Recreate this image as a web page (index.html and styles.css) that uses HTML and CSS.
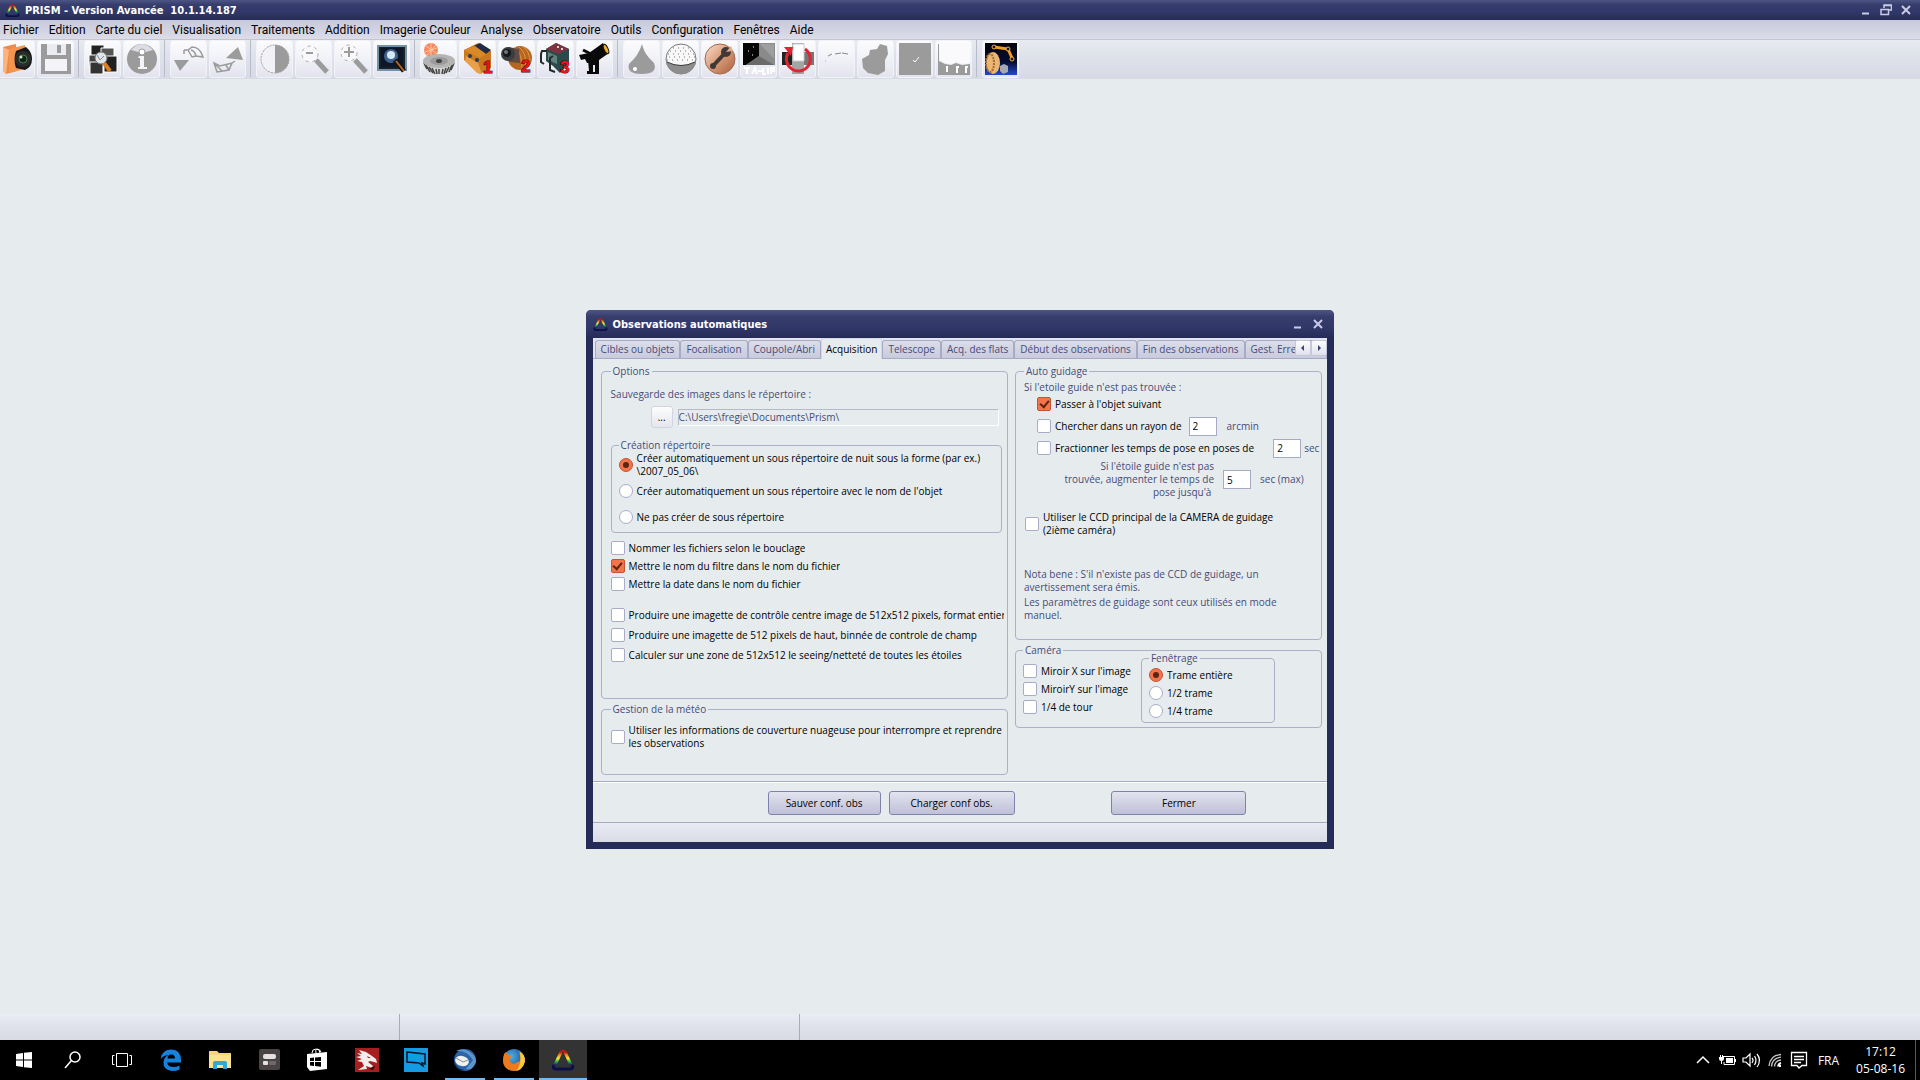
FILE: index.html
```html
<!DOCTYPE html>
<html lang="fr">
<head>
  <meta charset="UTF-8">
  <meta name="viewport" content="width=device-width, initial-scale=1.0">
  <title>PRISM - Version Avancée 10.1.14.187</title>
  <link rel="stylesheet" href="styles.css">
</head>
<body>

  <!-- Shared shapes -->
  <svg class="defs" aria-hidden="true">
    <defs>
      <linearGradient id="gLeft" x1="0" y1="0" x2="0" y2="1">
        <stop offset="0" stop-color="#d21f14"/><stop offset=".3" stop-color="#f0a81c"/>
        <stop offset=".5" stop-color="#f2e83a"/><stop offset=".75" stop-color="#22b14c"/><stop offset="1" stop-color="#14206e"/>
      </linearGradient>
      <linearGradient id="gCopper" x1="0" y1="0" x2="1" y2="1">
        <stop offset="0" stop-color="#fbe0cf"/><stop offset=".5" stop-color="#d99a78"/><stop offset="1" stop-color="#a9603c"/>
      </linearGradient>
      <linearGradient id="gSky" x1="0" y1="0" x2="0" y2="1">
        <stop offset="0" stop-color="#02030a"/><stop offset=".6" stop-color="#060c34"/><stop offset="1" stop-color="#2448d0"/>
      </linearGradient>
      <radialGradient id="gFox" cx=".35" cy=".35" r=".7">
        <stop offset="0" stop-color="#4fb4e8"/><stop offset="1" stop-color="#14438c"/>
      </radialGradient>
      <symbol id="prism" viewBox="0 0 24 24">
        <path d="M3 17 Q1 21 5 21 H19 Q23 21 21 17" fill="none" stroke="#0c1048" stroke-width="3"/>
        <path d="M10 4 L4 17" fill="none" stroke="url(#gLeft)" stroke-width="3"/>
        <path d="M14 4 L20 17" fill="none" stroke="url(#gLeft)" stroke-width="3"/>
        <path d="M9 5 Q12 0 15 5" fill="none" stroke="#c01c14" stroke-width="2"/>
      </symbol>
    </defs>
  </svg>

  <header class="titlebar">
    <svg class="app-icon" viewBox="0 0 24 24"><use href="#prism"/></svg>
    <h1>PRISM - Version Avancée&nbsp; 10.1.14.187</h1>
    <div class="window-buttons">
      <button aria-label="Réduire"><svg viewBox="0 0 12 12"><path d="M2 9.500H9" stroke="#c9cce6" stroke-width="2"/></svg></button>
      <button aria-label="Restaurer"><svg viewBox="0 0 12 12"><path d="M4 4V1H11.500V6H9M1 5.500H8.500V10.500H1ZM4 1.500H11.500M1 5.500H8.500" fill="none" stroke="#c9cce6" stroke-width="1.500"/></svg></button>
      <button aria-label="Fermer l'application"><svg viewBox="0 0 12 12"><path d="M2 2L10 10M10 2L2 10" stroke="#c9cce6" stroke-width="2"/></svg></button>
    </div>
  </header>

  <nav class="menubar">
    <a href="#">Fichier</a>
    <a href="#">Edition</a>
    <a href="#">Carte du ciel</a>
    <a href="#">Visualisation</a>
    <a href="#">Traitements</a>
    <a href="#">Addition</a>
    <a href="#">Imagerie Couleur</a>
    <a href="#">Analyse</a>
    <a href="#">Observatoire</a>
    <a href="#">Outils</a>
    <a href="#">Configuration</a>
    <a href="#">Fenêtres</a>
    <a href="#">Aide</a>
  </nav>

  <div class="toolbar">
    <div class="tool-group">
      <button aria-label="Ouvrir"><svg viewBox="0 0 32 32"><path d="M2 4L15 1L16 28L5 31L2 28Z" fill="#ef8a45"/><path d="M2 4L8 7L5 31L2 28Z" fill="#ffb37c"/><path d="M8 6L24 2V26L8 30Z" fill="#f3954f"/><path d="M15 8L25 4Q31 9 31 16Q31 24 24 27L15 25Q12 16 15 8Z" fill="#181818"/><circle cx="22" cy="16" r="8" fill="#2a2c2a"/><circle cx="22" cy="16" r="4" fill="#0c2414" stroke="#557a58"/><circle cx="20" cy="14" r="1.500" fill="#c9e8c4"/></svg></button>
      <button aria-label="Enregistrer"><svg viewBox="0 0 32 32"><path d="M1 1H31V31H1Z" fill="#9b9b9b"/><path d="M7 1H26V12H7Z" fill="#ebecf2"/><path d="M17 2H21V10H17Z" fill="#9b9b9b"/><path d="M5 16H27V28H5Z" fill="#f4f4f8"/></svg></button>
    </div>
    <div class="tool-group">
      <button aria-label="Explorer les images"><svg viewBox="0 0 32 32"><g stroke="#fff"><path d="M4 2H17V14H4Z" fill="#222"/><path d="M14 5H27V17H14Z" fill="#555"/><path d="M2 12H13V23H2Z" fill="#444"/><path d="M17 13H30V29H17Z" fill="#222"/><path d="M3 19H16V31H3Z" fill="#333"/></g><circle cx="14" cy="15" r="6" fill="#dfe4ea" stroke="#777"/><path d="M10 12L13 17L17 13" fill="none" stroke="#888"/><path d="M17 20L23 28" stroke="#d98122" stroke-width="4"/></svg></button>
      <button aria-label="Informations"><svg viewBox="0 0 32 32"><circle cx="16" cy="16" r="15" fill="#9b9b9b"/><path d="M5 7Q10 1 16 1T27 7L20 9H12Z" fill="#dcdde4"/><circle cx="16" cy="9" r="3" fill="#fff" stroke="#9b9b9b"/><path d="M13 13H18V24H21V26H12V24H14V15H12Z" fill="#f4f4f8"/></svg></button>
    </div>
    <div class="tool-group">
      <button aria-label="Annuler"><svg viewBox="0 0 32 32"><path d="M1 17H16L7 28Z" fill="#9b9b9b"/><path d="M11 7H15L19 4Q27 4 30 14L23 13L19 14L15 7M18 7Q22 8 23 13M11 7V11" fill="none" stroke="#9b9b9b" stroke-width="1.500"/></svg></button>
      <button aria-label="Rétablir"><svg viewBox="0 0 32 32"><path d="M14 15L26 4L31 17Z" fill="#9b9b9b"/><path d="M2 20L8 23L20 20L17 27L5 29ZM2 20L10 28M14 22L17 27M20 20L23 18" fill="none" stroke="#9b9b9b" stroke-width="1.500"/></svg></button>
    </div>
    <div class="tool-group">
      <button aria-label="Contraste"><svg viewBox="0 0 32 32"><circle cx="16" cy="16" r="14" fill="#f1f1f6" stroke="#9b9b9b" stroke-dasharray="2 1"/><path d="M16 2A14 14 0 0 1 16 30Z" fill="#9b9b9b"/></svg></button>
      <button aria-label="Zoom arrière"><svg viewBox="0 0 32 32"><circle cx="12" cy="11" r="8" fill="#f8f8fb" stroke="#aaa" stroke-dasharray="3 4"/><path d="M8 10H15" stroke="#9b9b9b" stroke-width="2"/><path d="M18 17L29 29" stroke="#9b9b9b" stroke-width="5"/></svg></button>
      <button aria-label="Zoom avant"><svg viewBox="0 0 32 32"><circle cx="12" cy="10" r="8" fill="#f8f8fb" stroke="#aaa" stroke-dasharray="3 4"/><path d="M7 9H17M12 4V14" stroke="#9b9b9b" stroke-width="2"/><path d="M18 17L29 29" stroke="#9b9b9b" stroke-width="5"/></svg></button>
      <button aria-label="Zoom sur l'écran"><svg viewBox="0 0 32 32"><path d="M2 3H30V27H2Z" fill="#1b2026" stroke="#7292a8" stroke-width="2"/><path d="M5 5H27V24H5Z" fill="#0c1728"/><circle cx="15" cy="13" r="7" fill="#40628f"/><circle cx="15" cy="12" r="4" fill="#d5e9fa"/><path d="M19 17L28 28" stroke="#141414" stroke-width="5"/><path d="M20 18L28 28" stroke="#b5682a" stroke-width="2"/></svg></button>
    </div>
    <div class="tool-group">
      <button aria-label="Prétraitement"><svg viewBox="0 0 32 32"><circle cx="8" cy="7" r="7" fill="#f58a5c"/><path d="M3 3L14 11M8 0V14M2 9L14 5M4 12L13 2" stroke="#ffc7a4"/><path d="M0 18Q1 29 10 31H22Q31 29 32 18Z" fill="#d6d6d6"/><path d="M1 20L4 26M3 22L7 29M6 24L10 30M9 25L12 31M13 26L14 31M16 26V31M20 26L19 31M23 25L21 31M26 24L23 30M29 22L26 29M31 20L28 27" stroke="#444" stroke-width="1.500"/><ellipse cx="16" cy="18" rx="16" ry="7" fill="#b4b4b4"/><ellipse cx="16" cy="18" rx="9" ry="4" fill="#9b9b9b"/><ellipse cx="16" cy="18" rx="3" ry="2" fill="#444"/></svg></button>
      <button aria-label="Caméra 1"><svg viewBox="0 0 32 32"><path d="M2 7L16 0L29 8L29 25L18 31L2 17Z" fill="#c97a20"/><path d="M12 3L18 0L29 7L24 11Z" fill="#222b46"/><path d="M2 7L13 3L24 11L18 15Z" fill="#d98a26"/><path d="M4 13L16 20L20 31L15 30L3 18Z" fill="#eaa04a"/><circle cx="8" cy="13" r="2" fill="#2b3a55"/><circle cx="15" cy="17" r="2" fill="#2b3a55"/><text x="21" y="30" class="num">1</text></svg></button>
      <button aria-label="Caméra 2"><svg viewBox="0 0 32 32"><ellipse cx="19" cy="15" rx="12" ry="12" fill="#b8651f"/><path d="M22 4Q29 8 29 20M18 4Q25 9 25 23M14 4Q21 10 21 25" fill="none" stroke="#dd9548"/><path d="M7 4L18 6L19 20L8 19Z" fill="#5f4b43"/><circle cx="7" cy="11" r="7" fill="#3a3d42"/><circle cx="6" cy="10" r="4" fill="#16181c"/><circle cx="5" cy="9" r="2" fill="#6d7679"/><text x="20" y="29" class="num">2</text></svg></button>
      <button aria-label="Caméra 3"><svg viewBox="0 0 32 32"><path d="M6 6L16 0L29 6V20L20 30L13 23L6 18Z" fill="#2b4a4c"/><path d="M6 6L16 0L29 6L18 11Z" fill="#7d3440"/><path d="M8 9L17 13V21L8 17Z" fill="#5e827c"/><path d="M7 8H2L1 11V19L4 21M13 13L10 15V27L15 29" fill="none" stroke="#24282a" stroke-width="2"/><circle cx="18" cy="4" r="1" fill="#fff"/><circle cx="22" cy="6" r="1" fill="#fff"/><text x="20" y="30" class="num">3</text></svg></button>
      <button aria-label="Télescope"><svg viewBox="0 0 32 32"><path d="M0 12L10 10L24 0L30 10L20 17V20H8L6 16L2 17Z" fill="#0a0a0a"/><path d="M9 17H20V31H8V28H10Z" fill="#0a0a0a"/><path d="M15 22V29" stroke="#e8e9f1" stroke-width="2"/><ellipse cx="27" cy="6" rx="2" ry="5" transform="rotate(-25 27 6)" fill="#f3ab27" stroke="#111"/><path d="M4 7L12 11" stroke="#0a0a0a" stroke-width="3"/></svg></button>
    </div>
    <div class="tool-group">
      <button aria-label="Météo"><svg viewBox="0 0 32 32"><path d="M16 1C18 10 23 15 28 20Q32 31 16 31T3 21Q13 12 16 1Z" fill="#9b9b9b"/><circle cx="9" cy="26" r="2" fill="#fff"/></svg></button>
      <button aria-label="Coupole"><svg viewBox="0 0 32 32"><circle cx="16" cy="16" r="15" fill="#f8f8f8" stroke="#777"/><g stroke="#777" stroke-dasharray="1 4"><path d="M8 5H26M5 8H28M3 11H30M4 14H30M2 17H29"/></g><path d="M1 19Q16 26 31 19Q28 31 16 31T1 19Z" fill="#8d8d8d"/><path d="M2 19Q16 26 30 19" fill="none" stroke="#333"/></svg></button>
      <button aria-label="Réglages"><svg viewBox="0 0 32 32"><circle cx="16" cy="16" r="15" fill="url(#gCopper)" stroke="#a0684c"/><path d="M8 24L22 9" stroke="#403936" stroke-width="4"/><circle cx="9" cy="23" r="3" fill="#403936"/><circle cx="22" cy="9" r="5" fill="#403936"/><path d="M22 9L27 3L29 8Z" fill="#e0aa8d"/></svg></button>
      <button aria-label="Table"><svg viewBox="0 0 32 32"><path d="M0 0H32V22H0Z" fill="#8a8a8a"/><path d="M0 0H16V13L3 22H0Z" fill="#050505"/><path d="M16 13L31 22H3Z" fill="#6a6a6a"/><path d="M17 1H31V16Z" fill="#9e9e9e"/><path d="M5 8H6M10 4H11M9 12H10" stroke="#fff"/><path d="M1 25H7M4 25V31M9 31L12 25L14 31M15 28H19M20 25V31H23M25 25V31M28 31V25H31V28H28" fill="none" stroke="#fff" stroke-width="2"/></svg></button>
      <button aria-label="Rotation"><svg viewBox="0 0 32 32"><path d="M0 9H32V22H0Z" fill="#777"/><path d="M0 9H12V22H0Z" fill="#222"/><path d="M10 0H22V31H10Z" fill="#a4a4a4"/><path d="M11 1H22V18H11Z" fill="#fff" stroke="#ccc"/><path d="M23 6A12 12 0 1 1 6 10" fill="none" stroke="#e02532" stroke-width="3"/><path d="M2 4L11 4L9 13Z" fill="#e02532"/></svg></button>
      <button aria-label="Courbe"><svg viewBox="0 0 32 32"><path d="M7 13L11 11M14 11L20 10M21 10L27 11" stroke="#888"/><path d="M4 18H5" stroke="#aaa"/></svg></button>
      <button aria-label="Comète"><svg viewBox="0 0 32 32"><path d="M2 16L9 12L10 7L17 6L20 1L27 3L28 11L25 17V28L18 32L8 30L3 25Z" fill="#9b9b9b"/></svg></button>
      <button aria-label="Astéroïde"><svg viewBox="0 0 32 32"><path d="M0 0H32V32H0Z" fill="#9b9b9b"/><path d="M14 17L16 19L20 14" fill="none" stroke="#fff"/></svg></button>
      <button aria-label="Spectre"><svg viewBox="0 0 32 32"><path d="M1 1V18L7 21L13 22L18 20L24 22L32 21V32H0V1Z" fill="#9b9b9b"/><path d="M2 0H32V20L24 21L18 19L13 21L7 20L2 17Z" fill="#fafafc"/><path d="M9 23V29M19 30V24H21M18 27H20M28 30V24H30M27 27H29" fill="none" stroke="#fff" stroke-width="2"/></svg></button>
    </div>
    <div class="tool-group">
      <button aria-label="Observations automatiques"><svg viewBox="0 0 32 32"><path d="M0 0H32V32H0Z" fill="url(#gSky)"/><ellipse cx="8" cy="20" rx="7" ry="11" fill="#e9b673"/><ellipse cx="5" cy="20" rx="4" ry="9" fill="none" stroke="#a66d34" stroke-width="2" stroke-dasharray="2 1"/><path d="M9 4L23 6L27 15" fill="none" stroke="#f09a24" stroke-width="3"/><g fill="#141414" stroke="#f6b04a"><circle cx="9" cy="4" r="2"/><circle cx="23" cy="6" r="2"/><circle cx="27" cy="16" r="2"/></g><path d="M15 23L19 21L23 23V29L18 31L15 28Z" fill="#a5a8ae"/></svg></button>
    </div>
  </div>

  <main class="workspace">
    <section class="dialog">
      <header class="dialog-title">
        <svg class="app-icon" viewBox="0 0 24 24"><use href="#prism"/></svg>
        <h2>Observations automatiques</h2>
        <div class="window-buttons">
          <button aria-label="Réduire la fenêtre"><svg viewBox="0 0 12 12"><path d="M2 9.500H9" stroke="#c9cce6" stroke-width="2"/></svg></button>
          <button aria-label="Fermer la fenêtre"><svg viewBox="0 0 12 12"><path d="M2 2L10 10M10 2L2 10" stroke="#c9cce6" stroke-width="2"/></svg></button>
        </div>
      </header>

      <div class="dialog-body">
        <div class="tabs">
          <button>Cibles ou objets</button>
          <button>Focalisation</button>
          <button>Coupole/Abri</button>
          <button class="active">Acquisition</button>
          <button>Telescope</button>
          <button>Acq. des flats</button>
          <button>Début des observations</button>
          <button>Fin des observations</button>
          <button class="cut">Gest. Erreurs</button>
          <div class="tab-arrows">
            <button aria-label="Onglet précédent"><svg viewBox="0 0 8 8"><path d="M5 1V7L2 4Z"/></svg></button>
            <button aria-label="Onglet suivant"><svg viewBox="0 0 8 8"><path d="M3 1V7L6 4Z"/></svg></button>
          </div>
        </div>

        <div class="tab-page">
          <div class="column">
            <fieldset class="options">
              <legend>Options</legend>
              <label class="info" for="path">Sauvegarde des images dans le répertoire :</label>
              <div class="path-row">
                <button class="browse">...</button>
                <input type="text" id="path" value="C:\Users\fregie\Documents\Prism\" disabled>
              </div>
              <fieldset class="folder">
                <legend>Création répertoire</legend>
                <label><input type="radio" name="folder" checked><span>Créer automatiquement un sous répertoire de nuit sous la forme (par ex.) \2007_05_06\</span></label>
                <label><input type="radio" name="folder"><span>Créer automatiquement un sous répertoire avec le nom de l'objet</span></label>
                <label><input type="radio" name="folder"><span>Ne pas créer de sous répertoire</span></label>
              </fieldset>
              <div class="checks">
                <label><input type="checkbox"><span>Nommer les fichiers selon le bouclage</span></label>
                <label><input type="checkbox" checked><span>Mettre le nom du filtre dans le nom du fichier</span></label>
                <label><input type="checkbox"><span>Mettre la date dans le nom du fichier</span></label>
              </div>
              <div class="checks spaced">
                <label><input type="checkbox"><span>Produire une imagette de contrôle centre image de 512x512 pixels, format entier</span></label>
                <label><input type="checkbox"><span>Produire une imagette de 512 pixels de haut, binnée de controle de champ</span></label>
                <label><input type="checkbox"><span>Calculer sur une zone de 512x512 le seeing/netteté de toutes les étoiles</span></label>
              </div>
            </fieldset>
            <fieldset class="weather">
              <legend>Gestion de la météo</legend>
              <label><input type="checkbox"><span>Utiliser les informations de couverture nuageuse pour interrompre et reprendre les observations</span></label>
            </fieldset>
          </div>

          <div class="column">
            <fieldset class="guiding">
              <legend>Auto guidage</legend>
              <p>Si l'etoile guide n'est pas trouvée :</p>
              <div class="guide-row first">
                <label><input type="checkbox" checked><span>Passer à l'objet suivant</span></label>
              </div>
              <div class="guide-row">
                <label><input type="checkbox"><span>Chercher dans un rayon de</span></label>
                <input type="text" id="radius" class="value" value="2">
                <label for="radius" class="unit far">arcmin</label>
              </div>
              <div class="guide-row">
                <label class="grow"><input type="checkbox"><span>Fractionner les temps de pose en poses de</span></label>
                <input type="text" id="split" class="value" value="2">
                <label for="split" class="unit">sec</label>
              </div>
              <div class="increase-row">
                <label for="increase">Si l'étoile guide n'est pas<br>trouvée, augmenter le temps de<br>pose jusqu'à&nbsp;</label>
                <input type="text" id="increase" class="value" value="5">
                <span>sec (max)</span>
              </div>
              <label class="ccd"><input type="checkbox"><span>Utiliser le CCD principal de la CAMERA de guidage (2ième caméra)</span></label>
              <div class="note">
                <p>Nota bene : S'il n'existe pas de CCD de guidage, un avertissement sera émis.</p>
                <p>Les paramètres de guidage sont ceux utilisés en mode manuel.</p>
              </div>
            </fieldset>
            <fieldset class="camera">
              <legend>Caméra</legend>
              <div class="checks">
                <label><input type="checkbox"><span>Miroir X sur l'image</span></label>
                <label><input type="checkbox"><span>MiroirY sur l'image</span></label>
                <label><input type="checkbox"><span>1/4 de tour</span></label>
              </div>
              <fieldset class="framing">
                <legend>Fenêtrage</legend>
                <label><input type="radio" name="frame" checked><span>Trame entière</span></label>
                <label><input type="radio" name="frame"><span>1/2 trame</span></label>
                <label><input type="radio" name="frame"><span>1/4 trame</span></label>
              </fieldset>
            </fieldset>
          </div>
        </div>

        <div class="actions">
          <button class="save">Sauver conf. obs</button>
          <button class="load">Charger conf obs.</button>
          <button class="close">Fermer</button>
        </div>
        <div class="dialog-status"></div>
      </div>
    </section>
  </main>

  <div class="statusbar"><span></span><span></span><span></span></div>

  <footer class="taskbar">
    <div class="apps">
      <button aria-label="Démarrer"><svg viewBox="0 0 24 24"><path d="M4 6L11 5V11.500H4ZM12 4.800L20 4V11.500H12ZM4 12.500H11V19L4 18ZM12 12.500H20V20L12 19.200Z" fill="#fff"/></svg></button>
      <button aria-label="Rechercher"><svg viewBox="0 0 24 24"><circle cx="14" cy="9" r="5" fill="none" stroke="#fff" stroke-width="1.500"/><path d="M10.500 12.500L4 20" stroke="#fff" stroke-width="1.500"/></svg></button>
      <button aria-label="Affichage des tâches"><svg viewBox="0 0 24 24"><path d="M6.500 5.500H17.500V18.500H6.500ZM4.500 7.500H2.500V16.500H4.500M19.500 7.500H21.500V16.500H19.500" fill="none" stroke="#fff"/></svg></button>
      <button aria-label="Edge"><svg viewBox="0 0 24 24"><path d="M1.500 11Q3 1.500 12.500 1.500Q22 2 22 12V14.500H8Q9 19 14.500 19Q18 19 20.500 17.500V21.500Q17 23 13 23Q4 22 4.500 14Q5 9 9.500 7Q4 7.500 1.500 11ZM8.500 10.500H16Q16 6.500 12.300 6.500T8.500 10.500Z" fill="#1583dd" fill-rule="evenodd"/></svg></button>
      <button aria-label="Explorateur"><svg viewBox="0 0 24 24"><path d="M1 3H9L11 5H23V20H1Z" fill="#f6d674"/><path d="M1 7H23V20H1Z" fill="#fbe28f"/><path d="M5 21V15Q5 13 7 13H17Q19 13 19 15V21H15V17H9V21Z" fill="#2fa9dc"/></svg></button>
      <button aria-label="Paramètres"><svg viewBox="0 0 24 24"><rect x="2" y="1" width="21" height="21" rx="2" fill="#494343"/><rect x="6" y="6" width="13" height="5" rx="2" fill="#e2e2e2"/><rect x="6" y="13" width="5" height="4" rx="1" fill="#e2e2e2"/><rect x="12" y="13" width="7" height="4" rx="1" fill="#6e6868"/></svg></button>
      <button aria-label="Store"><svg viewBox="0 0 24 24"><path d="M1 6L21 4V21L4 23L1 19Z" fill="#fff"/><path d="M6 5Q6 1 10 1T14 5M10 5Q9 2 11 1Q14 1 15 4" fill="none" stroke="#fff"/><path d="M4 10L8 9.500V13H4ZM9 9.400L15 9V13H9ZM4 14H8V18L4 17.500ZM9 14H15V18.800L9 18Z" fill="#000"/></svg></button>
      <button aria-label="Dragon"><svg viewBox="0 0 24 24"><path d="M0 0H24V24H0Z" fill="#a51f1e"/><path d="M2 5L7 6L4 2L11 4L17 8L21 11L22 15L19 14L15 13L13 14L18 18L17 20L11 18L12 21L3 22L9 18L7 14L2 13L7 11L1 9L6 8Z" fill="#f2eeee"/><path d="M12 8L16 10L13 10Z" fill="#a51f1e"/><path d="M17 19L20 18L18 22L14 21Z" fill="#3a0808"/></svg></button>
      <button aria-label="Messages"><svg viewBox="0 0 24 24"><path d="M0 0H24V24H0Z" fill="#159be2"/><path d="M3 4L21 6V16L18 15L19 18L15 15L3 14Z" fill="none" stroke="#0b1622" stroke-width="1.500"/></svg></button>
      <button class="running" aria-label="Thunderbird"><svg viewBox="0 0 24 24"><circle cx="12" cy="12" r="11" fill="#2c64ab"/><path d="M3 3Q10 -1 17 4Q23 8 23 14Q19 23 13 21L20 12Q14 2 3 3Z" fill="#5a97cc"/><ellipse cx="9" cy="13" rx="7" ry="5" transform="rotate(15 9 13)" fill="#f0f0ee"/><path d="M3 10L10 14L15 12" fill="none" stroke="#8c8c96"/><path d="M1 11Q2 21 12 22Q5 24 1 16Z" fill="#123060"/></svg></button>
      <button class="running" aria-label="Firefox"><svg viewBox="0 0 24 24"><circle cx="12" cy="12" r="11" fill="url(#gFox)"/><path d="M2 6L4 4L6 7L10 8L7 11L9 15Q13 17 15 14Q20 14 18 8L17 3Q23 6 23 13Q21 23 12 23Q1 22 1 12Z" fill="#ef7a1c"/><path d="M18 4Q23 7 23 13Q21 21 14 23Q20 17 18 4Z" fill="#fbc93a"/></svg></button>
      <button class="running current" aria-label="PRISM"><svg viewBox="0 0 24 24"><use href="#prism"/></svg></button>
    </div>
    <div class="tray">
      <svg viewBox="0 0 24 24"><path d="M6 15L12 9L18 15" fill="none" stroke="#fff" stroke-width="1.500"/></svg>
      <svg viewBox="0 0 24 24"><path d="M8 8.500H19.500V16.500H9V14" fill="none" stroke="#fff"/><path d="M11 10H18V15H11ZM20 11H21V14H20ZM4 9H9V11Q9 13 6.500 13T4 11ZM5 7H6V9H5ZM7 7H8V9H7ZM6 13H7V16H6Z" fill="#fff"/></svg>
      <svg viewBox="0 0 24 24"><path d="M4 10H7L11 6V18L7 14H4ZM13 10Q15 12 13 15M15.500 8Q18.500 12 15.500 17M18 6Q23 12 18 19" fill="none" stroke="#fff" stroke-width="1.200"/></svg>
      <svg viewBox="0 0 24 24"><path d="M15 18.500A4 4 0 0 1 18 15" stroke="#fff" fill="none" stroke-width="2"/><path d="M11.500 18.500Q12 12.500 18 12M8.500 18.500Q9 10 18 9.200M6 18Q7 7 18 6.500" fill="none" stroke="#c8c8c8" stroke-width="1.300"/><rect x="16" y="17" width="2" height="2" fill="#fff"/></svg>
      <svg viewBox="0 0 24 24"><path d="M4.500 4.500H19.500V17.500H15L12 20L10 17.500H4.500ZM7 8.500H17M7 11.500H17M7 14.500H14" fill="none" stroke="#fff" stroke-width="1.300"/></svg>
      <span class="lang">FRA</span>
      <div class="clock"><time>17:12</time><time>05-08-16</time></div>
    </div>
  </footer>

</body>
</html>
```

FILE: styles.css
```css
* {
  box-sizing: border-box;
}
body {
  margin: 0;
  min-height: 100vh;
  display: flex;
  flex-direction: column;
  background-color: #e6ebee;
  font-family: "Open Sans", sans-serif;
  font-size: 12px;
  color: #000;
}
button, input {
  font: inherit;
  color: inherit;
  margin: 0;
  padding: 0;
}
p, h1, h2 {
  margin: 0;
}
.defs {
  position: absolute;
  width: 0;
  height: 0;
}

/* Application title, menu and toolbar */
.titlebar, .dialog-title {
  display: flex;
  align-items: center;
  background: linear-gradient(#4d5584, #363d6c 25%, #31386a 60%, #272c56);
  color: #fff;
}
.titlebar {
  height: 20px;
  padding: 0 8px 0 5px;
}
.titlebar h1, .dialog-title h2 {
  flex: 1;
  font-family: "DejaVu Sans Condensed", "DejaVu Sans", sans-serif;
  font-size: 11px;
  font-weight: bold;
}
.app-icon {
  width: 15px;
  height: 15px;
  margin-right: 5px;
}
.window-buttons {
  display: flex;
  gap: 8px;
}
.window-buttons button {
  width: 12px;
  height: 12px;
  border: none;
  background: none;
}
.window-buttons svg {
  display: block;
}
.menubar {
  display: flex;
  align-items: center;
  gap: 10px;
  height: 20px;
  padding-left: 3px;
  background: linear-gradient(#c8c9dc, #cfd0e0 40%, #dcdde8);
  border-bottom: 1px solid #c3c5d2;
  font-family: Roboto, sans-serif;
}
.menubar a {
  color: #000;
  text-decoration: none;
}
.toolbar {
  display: flex;
  height: 39px;
  margin-left: -2px;
  background: linear-gradient(#e7ebee, #dfe2eb 40%, #d7d9e5);
}
.tool-group {
  display: flex;
  gap: 2px;
  padding-right: 4px;
  margin-right: 5px;
  border-right: 1px solid #b9bbcb;
  height: 37px;
}
.tool-group:last-child {
  border: none;
}
.tool-group button {
  width: 37px;
  height: 38px;
  border: 1px solid #f2f3f8;
  border-radius: 3px;
  background: linear-gradient(#fcfcfe, #eeeff5 60%, #e2e3ee);
  display: flex;
  align-items: center;
  justify-content: center;
}
.tool-group svg {
  width: 32px;
  height: 32px;
  overflow: visible;
}
.num {
  font: bold 17px "Liberation Sans", sans-serif;
  fill: #f01418;
  stroke: #400;
  stroke-width: 1px;
  paint-order: stroke;
}

/* Dialog window */
.workspace {
  flex: 1;
  display: flex;
  justify-content: center;
  align-items: flex-start;
  padding-top: 231px;
}
.dialog {
  width: 39%;
  min-width: 740px;
  padding: 0 7px 7px;
  background-color: #262c58;
  border-radius: 5px 5px 0 0;
  overflow: hidden;
  font-size: 10px;
  line-height: 13px;
}
.dialog-title {
  height: 28px;
  margin: 0 -7px;
  padding: 0 10px 0 7px;
}
.dialog-body {
  background-color: #e6ebee;
}
.tabs {
  display: flex;
  align-items: flex-end;
  height: 21px;
  padding-left: 2px;
  background-color: #e3e5ee;
  border-bottom: 1px solid #a7aac4;
  position: relative;
}
.tabs > button {
  height: 18px;
  padding: 0 5px;
  border: 1px solid #a7aac4;
  border-bottom: none;
  border-radius: 3px 3px 0 0;
  background: linear-gradient(#dcdde9, #c9cadc);
  color: #474c78;
  white-space: nowrap;
}
.tabs > .active {
  height: 21px;
  margin-bottom: -1px;
  padding: 0 4px;
  border-color: #d5d7e3;
  background: #e6ebee;
  color: #000;
}
.tabs > .cut {
  flex: 1;
  min-width: 0;
  overflow: hidden;
  text-align: left;
}
.tab-arrows {
  position: absolute;
  right: 0;
  bottom: 2px;
  display: flex;
}
.tab-arrows button {
  width: 16px;
  height: 16px;
  border: 1px solid #c5c7da;
  border-radius: 2px;
  background: linear-gradient(#fdfdfe, #dfe0eb);
}
.tab-arrows svg {
  display: block;
  width: 8px;
  height: 8px;
  margin: auto;
  fill: #3c4274;
}
.tab-page {
  display: grid;
  grid-template-columns: 57fr 43fr;
  gap: 7px;
  padding: 5px 5px 6px 8px;
  border-bottom: 1px solid #a7aac4;
}
.column {
  display: flex;
  flex-direction: column;
  min-width: 0;
}

/* Group boxes */
fieldset {
  min-width: 0;
  margin: 0;
  border: 1px solid #adb0c9;
  border-radius: 4px;
}
legend {
  padding: 0 2px;
  line-height: 14px;
}
legend, .info, .guiding p, .unit, .increase-row {
  color: #474c78;
}
.options {
  padding: 9px 3px 33px 9px;
}
.info {
  line-height: 14px;
}
.path-row {
  display: flex;
  align-items: center;
  gap: 5px;
  height: 22px;
  margin: 5px 5px 10px 40px;
}
.browse {
  width: 22px;
  height: 22px;
  border: 1px solid #d2d4e1;
  border-radius: 3px;
  background: linear-gradient(#fdfdfe, #e4e6ee);
}
.path-row input {
  flex: 1;
  min-width: 0;
  height: 17px;
  border: 1px solid;
  border-color: #b6b9c8 #fff #fff #b6b9c8;
  background: transparent;
  color: #474c78;
}
.folder {
  margin-right: 2px;
  padding: 0 7px 2px;
}
.folder label {
  min-height: 26px;
}
.options label, .weather label, .camera label, .guide-row label, .ccd {
  display: flex;
  align-items: center;
  gap: 4px;
}
.checks label {
  height: 18px;
  white-space: nowrap;
}
.checks span {
  overflow: hidden;
}
.options .checks {
  padding-top: 6px;
}
.options .spaced {
  padding-top: 12px;
}
.spaced label {
  height: 20px;
}
.weather {
  margin-top: 3px;
  padding: 8px 3px 24px 9px;
}

/* Tick boxes and radios */
input[type="checkbox"], input[type="radio"] {
  appearance: none;
  flex: none;
  width: 14px;
  height: 14px;
  border: 1px solid #a9acc9;
  border-radius: 2px;
  background-color: #fff;
  display: flex;
  align-items: center;
  justify-content: center;
}
input[type="radio"] {
  border-radius: 50%;
}
input[type="checkbox"]:checked, input[type="radio"]:checked {
  border-color: #c65334;
  background-color: #f3744a;
}
input[type="checkbox"]:checked::after {
  content: "";
  width: 7px;
  height: 4px;
  border: solid #5c2412;
  border-width: 0 0 2px 2px;
  transform: translateY(-1px) rotate(-50deg);
}
input[type="radio"]:checked::after {
  content: "";
  width: 6px;
  height: 6px;
  border-radius: 50%;
  background-color: #5c2412;
}

/* Auto guiding */
.guiding {
  padding: 3px 2px 17px 8px;
}
.guide-row {
  display: flex;
  align-items: center;
  height: 22px;
  padding-left: 13px;
  white-space: nowrap;
}
.guide-row.first {
  margin-top: -1px;
}
.value {
  width: 28px;
  height: 19px;
  margin-left: 7px;
  padding: 0 3px;
  border: 1px solid #a7aac4;
  background-color: #fff;
  color: #000;
}
.guide-row .grow {
  flex: 1;
}
.unit {
  margin-left: 3px;
}
.unit.far {
  margin-left: 10px;
}
.increase-row {
  display: flex;
  align-items: center;
  margin-left: 30px;
  gap: 9px;
  padding-top: 1px;
}
.increase-row label {
  width: 160px;
  text-align: right;
  white-space: nowrap;
}
.increase-row .value {
  margin: 0;
}
.ccd {
  margin: 12px 30px 31px 1px;
}
.note {
  padding-right: 24px;
}
.note p + p {
  margin-top: 2px;
}
.camera {
  display: flex;
  gap: 10px;
  margin-top: 3px;
  padding: 0 6px 4px 7px;
}
.camera .checks {
  padding-top: 5px;
}
.framing {
  width: 134px;
  margin-top: -6px;
  padding: 1px 7px 2px;
}
.framing label {
  height: 18px;
}

/* Dialog footer */
.actions {
  display: flex;
  gap: 8px;
  padding: 8px 81px 7px 175px;
  border-top: 1px solid #fff;
}
.actions button {
  height: 24px;
  border: 1px solid #7f83ab;
  border-radius: 3px;
  background: linear-gradient(#e3e4ef, #d0d1e2 50%, #bfc0d8);
}
.save {
  width: 113px;
}
.load {
  width: 126px;
}
.close {
  width: 135px;
  margin-left: auto;
}
.dialog-status {
  height: 20px;
  border-top: 1px solid #a7aac4;
  background: linear-gradient(#e9ebf4, #d9dbe5);
}

/* Status bar */
.statusbar {
  display: flex;
  height: 26px;
  background: linear-gradient(#ebedf6, #dfe1ea 50%, #d9dbe4);
}
.statusbar span {
  width: 400px;
  border-right: 1px solid #a9abbb;
}
.statusbar span:last-child {
  flex: 1;
  border: none;
}

/* Windows taskbar */
.taskbar {
  display: flex;
  justify-content: space-between;
  height: 40px;
  background-color: #000;
  color: #fff;
}
.apps {
  display: flex;
  gap: 1px;
}
.apps button {
  width: 48px;
  border: none;
  border-bottom: 2px solid transparent;
  border-top: 2px solid transparent;
  background: none;
}
.apps svg {
  display: block;
  width: 24px;
  height: 24px;
  margin: auto;
}
.apps .running {
  background: linear-gradient(#76b9ed, #76b9ed) center bottom / 40px 2px no-repeat border-box;
}
.apps .current {
  background-color: #333;
  background-size: 48px 2px;
}
.tray {
  display: flex;
  align-items: center;
  padding-right: 4px;
}
.tray svg {
  width: 24px;
  height: 24px;
}
.lang {
  margin: 0 17px 0 7px;
}
.clock {
  display: flex;
  flex-direction: column;
  align-items: center;
  line-height: 17px;
  align-self: stretch;
  justify-content: center;
  padding-right: 10px;
  border-right: 1px solid #555;
}
```
